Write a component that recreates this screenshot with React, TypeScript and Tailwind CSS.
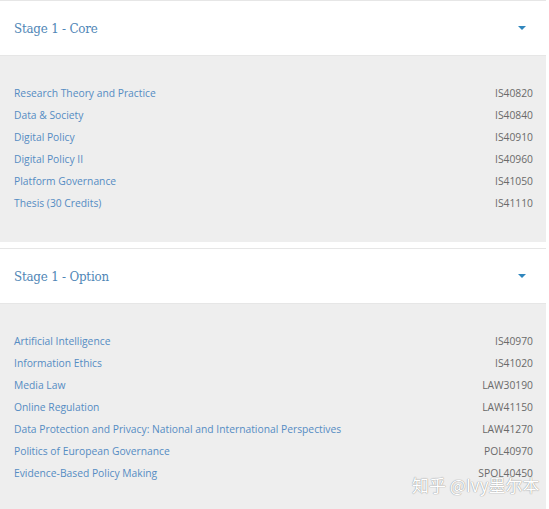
import React from 'react';

interface Module {
  title: string;
  code: string;
}

const core: Module[] = [
  { title: 'Research Theory and Practice', code: 'IS40820' },
  { title: 'Data & Society', code: 'IS40840' },
  { title: 'Digital Policy', code: 'IS40910' },
  { title: 'Digital Policy II', code: 'IS40960' },
  { title: 'Platform Governance', code: 'IS41050' },
  { title: 'Thesis (30 Credits)', code: 'IS41110' },
];

const options: Module[] = [
  { title: 'Artificial Intelligence', code: 'IS40970' },
  { title: 'Information Ethics', code: 'IS41020' },
  { title: 'Media Law', code: 'LAW30190' },
  { title: 'Online Regulation', code: 'LAW41150' },
  { title: 'Data Protection and Privacy: National and International Perspectives', code: 'LAW41270' },
  { title: 'Politics of European Governance', code: 'POL40970' },
  { title: 'Evidence-Based Policy Making', code: 'SPOL40450' },
];

const Section: React.FC<{ title: string; modules: Module[]; last?: boolean }> = ({ title, modules, last }) => {
  return (
    <div className={last ? '' : 'mb-[6px]'}>
      <div className="h-[56px] bg-white border-y border-[#e6e6e6] flex items-center justify-between pl-[14px] pr-[20px]">
        <h2 className="mt-[2px] text-[13.2px] text-[#4f86b6] font-['DejaVu_Serif_Condensed','DejaVu_Serif',serif] [font-stretch:condensed] tracking-[-0.2px]">
          {title}
        </h2>
        <span className="w-0 h-0 border-l-[4px] border-r-[4px] border-t-[4px] border-l-transparent border-r-transparent border-t-[#2f86bd]" />
      </div>
      <div className={`bg-[#eeeeee] pl-[14px] pr-[13px] pt-[27px] ${last ? 'pb-[30px]' : 'pb-[27px]'}`}>
        {modules.map((m) => (
          <div key={m.code} className="h-[22px] flex items-center justify-between text-[10.3px]">
            <span className="text-[#558cc3]">{m.title}</span>
            <span className="text-[#6a6a6a]">{m.code}</span>
          </div>
        ))}
      </div>
    </div>
  );
};

export default function App() {
  return (
    <div className="relative w-[549px] h-[509px] overflow-hidden bg-white font-['Open_Sans',sans-serif]">
      <div className="w-[546px]">
        <Section title="Stage 1 - Core" modules={core} />
        <Section title="Stage 1 - Option" modules={options} last />
      </div>
      <div className="absolute left-[412px] top-[472px] text-[17px] text-white font-['Noto_Sans_CJK_SC',sans-serif] [text-shadow:0_0_1px_#999,0_0_1px_#999]">
        知乎 @Ivy墨尔本
      </div>
    </div>
  );
}
